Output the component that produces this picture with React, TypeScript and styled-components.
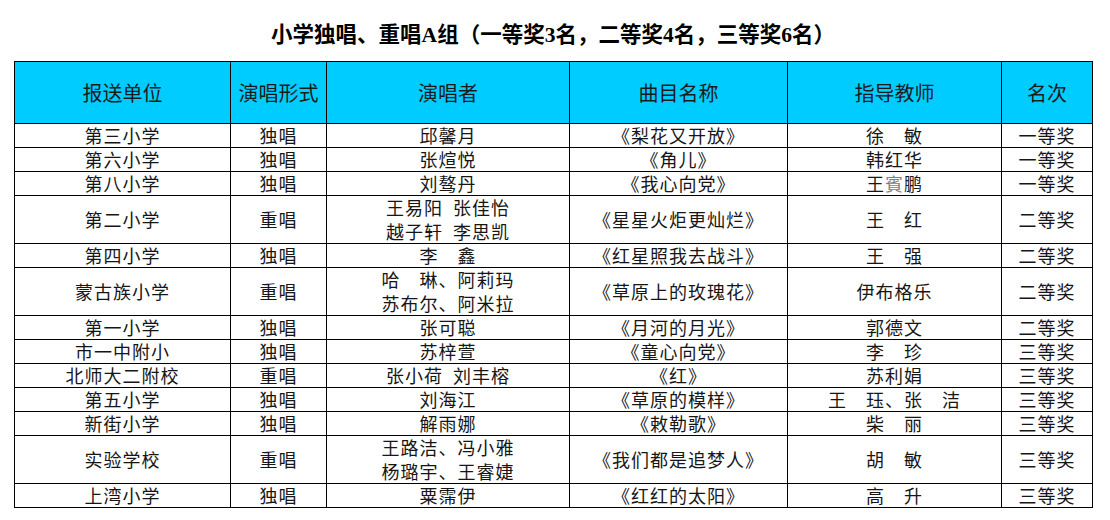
import React from 'react';
import styled, { createGlobalStyle } from 'styled-components';

const GlobalStyle = createGlobalStyle`
  html, body {
    margin: 0;
    padding: 0;
    background: #ffffff;
  }
  body {
    font-family: "Noto Sans CJK SC", "Liberation Sans", sans-serif;
    color: #111;
  }
`;

interface Entry {
  school: string;
  form: string;
  singers: string[];
  song: string;
  teacher: React.ReactNode;
  prize: string;
}

const entries: Entry[] = [
  { school: '第三小学', form: '独唱', singers: ['邱馨月'], song: '《梨花又开放》', teacher: '徐　敏', prize: '一等奖' },
  { school: '第六小学', form: '独唱', singers: ['张煊悦'], song: '《角儿》', teacher: '韩红华', prize: '一等奖' },
  { school: '第八小学', form: '独唱', singers: ['刘骜丹'], song: '《我心向党》', teacher: null, prize: '一等奖' },
  { school: '第二小学', form: '重唱', singers: ['王易阳\u2002张佳怡', '越子轩\u2002李思凯'], song: '《星星火炬更灿烂》', teacher: '王　红', prize: '二等奖' },
  { school: '第四小学', form: '独唱', singers: ['李　鑫'], song: '《红星照我去战斗》', teacher: '王　强', prize: '二等奖' },
  { school: '蒙古族小学', form: '重唱', singers: ['哈　琳、阿莉玛', '苏布尔、阿米拉'], song: '《草原上的玫瑰花》', teacher: '伊布格乐', prize: '二等奖' },
  { school: '第一小学', form: '独唱', singers: ['张可聪'], song: '《月河的月光》', teacher: '郭德文', prize: '二等奖' },
  { school: '市一中附小', form: '独唱', singers: ['苏梓萱'], song: '《童心向党》', teacher: '李　珍', prize: '三等奖' },
  { school: '北师大二附校', form: '重唱', singers: ['张小荷\u2002刘丰榕'], song: '《红》', teacher: '苏利娟', prize: '三等奖' },
  { school: '第五小学', form: '独唱', singers: ['刘海江'], song: '《草原的模样》', teacher: '王　珏、张　洁', prize: '三等奖' },
  { school: '新街小学', form: '独唱', singers: ['解雨娜'], song: '《敕勒歌》', teacher: '柴　丽', prize: '三等奖' },
  { school: '实验学校', form: '重唱', singers: ['王路洁、冯小雅', '杨璐宇、王睿婕'], song: '《我们都是追梦人》', teacher: '胡　敏', prize: '三等奖' },
  { school: '上湾小学', form: '独唱', singers: ['粟霈伊'], song: '《红红的太阳》', teacher: '高　升', prize: '三等奖' },
];

const columns = [
  { label: '报送单位', width: 216 },
  { label: '演唱形式', width: 96 },
  { label: '演唱者', width: 243 },
  { label: '曲目名称', width: 218 },
  { label: '指导教师', width: 214 },
  { label: '名次', width: 91 },
];

const Page = styled.div`
  padding: 0 0 0 14px;
  width: 1078px;
`;

const Title = styled.h1`
  margin: 0;
  height: 61px;
  display: flex;
  align-items: center;
  justify-content: center;
  padding-top: 4px;
  box-sizing: border-box;
  font-family: "Liberation Serif", "Noto Sans CJK SC", serif;
  font-weight: 700;
  font-size: 21.5px;
  color: #000;
`;

const Table = styled.table`
  width: 1078px;
  border-collapse: collapse;
  table-layout: fixed;
`;

const HeadCell = styled.th`
  height: 61px;
  padding: 0;
  background: #00ccff;
  border: 1px solid #000;
  font-family: "Noto Sans CJK SC", "Liberation Sans", sans-serif;
  font-weight: 400;
  font-size: 20px;
  line-height: 24px;
  color: #1b1b1b;
  text-align: center;
  vertical-align: middle;
`;

const Cell = styled.td<{ $lines: number }>`
  height: ${p => p.$lines * 24 - 1}px;
  padding: 0;
  border: 1px solid #000;
  font-family: "Noto Sans CJK SC", "Liberation Sans", sans-serif;
  font-size: 18px;
  font-weight: 400;
  line-height: 23px;
  letter-spacing: 1px;
  color: #161616;
  text-align: center;
  vertical-align: middle;
  white-space: nowrap;
  overflow: hidden;
`;

const Line = styled.div`
  height: 23.5px;
  line-height: 23.5px;
`;

const Faded = styled.span`
  color: #7a7f8a;
`;

export default function App() {
  return (
    <>
      <GlobalStyle />
      <Page>
        <Title>小学独唱、重唱A组（一等奖3名，二等奖4名，三等奖6名）</Title>
        <Table>
          <colgroup>
            {columns.map(c => (
              <col key={c.label} style={{ width: c.width }} />
            ))}
          </colgroup>
          <thead>
            <tr>
              {columns.map(c => (
                <HeadCell key={c.label}>{c.label}</HeadCell>
              ))}
            </tr>
          </thead>
          <tbody>
            {entries.map(e => {
              const lines = e.singers.length;
              return (
                <tr key={e.school}>
                  <Cell $lines={lines}>{e.school}</Cell>
                  <Cell $lines={lines}>{e.form}</Cell>
                  <Cell $lines={lines}>
                    {lines > 1
                      ? e.singers.map(s => <Line key={s}>{s}</Line>)
                      : e.singers[0]}
                  </Cell>
                  <Cell $lines={lines}>{e.song}</Cell>
                  <Cell $lines={lines}>
                    {e.teacher ?? (
                      <>
                        王<Faded>賓</Faded>鹏
                      </>
                    )}
                  </Cell>
                  <Cell $lines={lines}>{e.prize}</Cell>
                </tr>
              );
            })}
          </tbody>
        </Table>
      </Page>
    </>
  );
}
